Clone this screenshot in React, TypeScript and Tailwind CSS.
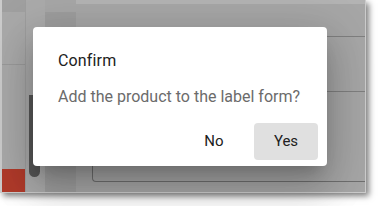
export default function App() {
  return (
    <div className="w-[378px] h-[206px] bg-white overflow-hidden relative" style={{ fontFamily: 'Roboto, "Liberation Sans", sans-serif' }}>
      <div className="w-[366px] h-[193px] flex border-l-2 border-r border-b border-[#cbcbcb] bg-[#a6a6a6] shadow-[3px_3px_6px_rgba(0,0,0,0.5)] overflow-hidden">
        <div className="w-[23px] flex flex-col bg-[#a9a9a9]">
          <div className="h-[12px] bg-[#a0a0a0]" />
          <div className="h-[53px] border-b border-[#9a9a9a]" />
          <div className="flex-1" />
          <div className="h-[23px] bg-[#b03a2a]" />
        </div>
        <div className="w-[20px] bg-[#aaaaaa] border-l border-[#9e9e9e] flex flex-col pl-[3px]">
          <div className="h-[95px]" />
          <div className="w-[11px] h-[82px] rounded-b-full bg-[#575757]" />
        </div>
        <div className="w-[31px] bg-[#9d9d9d] mt-[12px]" />
        <div className="flex-1 flex flex-col">
          <div className="h-[4px] bg-[#b3b3b3]" />
          <div className="h-[33px] border-b border-[#7f7f7f]" />
          <div className="h-[55px] border-b border-[#7f7f7f]" />
          <div className="flex-1 pl-[16px] flex flex-col">
            <div className="flex-1 -mr-[10px] border-l border-b border-[#6f6f6f] rounded-bl-[4px]" />
            <div className="h-[10px]" />
          </div>
        </div>
      </div>
      <div className="absolute left-[33px] top-[27px] w-[294px] h-[139px] bg-white rounded-[4px] shadow-[0px_11px_15px_-7px_rgba(0,0,0,0.2),0px_24px_38px_3px_rgba(0,0,0,0.14),0px_9px_46px_8px_rgba(0,0,0,0.12)] flex flex-col pl-[25px] pr-[9px] pt-[22px] pb-[6px]">
        <div className="text-[16px] leading-[24px] text-[#212121] tracking-[0.15px]">Confirm</div>
        <div className="mt-[12px] text-[16px] leading-[24px] text-[#6b6b6b]">Add the product to the label form?</div>
        <div className="flex-1" />
        <div className="flex justify-end gap-[8px]">
          <button className="w-[64px] h-[37px] rounded-[4px] text-[15px] text-[#212121]">No</button>
          <button className="w-[64px] h-[37px] rounded-[4px] text-[15px] text-[#212121] bg-[#e0e0e0]">Yes</button>
        </div>
      </div>
    </div>
  );
}
